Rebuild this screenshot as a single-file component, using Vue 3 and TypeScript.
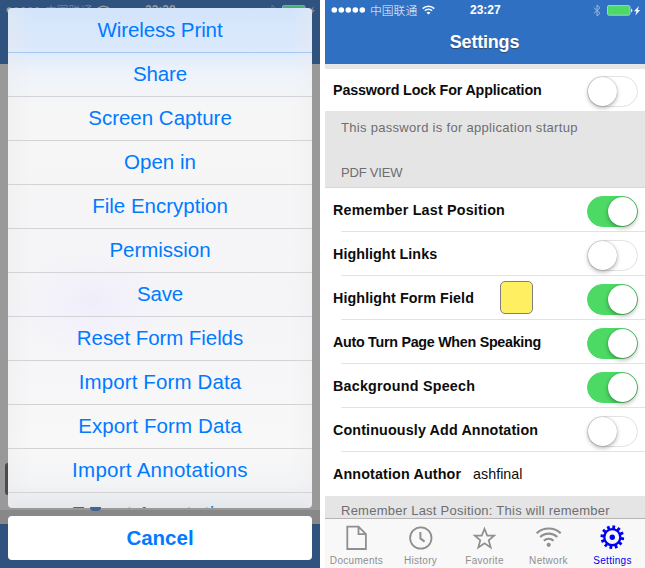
<script setup lang="ts">
interface Action {
  label: string
  tracking: number
}
interface Setting {
  label: string
  tracking: number
  on?: boolean
  color?: boolean
  value?: string
}
interface Tab {
  name: string
  icon: 'doc' | 'clock' | 'star' | 'wifi' | 'gear'
}

const actions: Action[] = [
  { label: 'Wireless Print', tracking: -0.1 },
  { label: 'Share', tracking: -0.1 },
  { label: 'Screen Capture', tracking: 0 },
  { label: 'Open in', tracking: 0 },
  { label: 'File Encryption', tracking: 0 },
  { label: 'Permission', tracking: -0.02 },
  { label: 'Save', tracking: -0.2 },
  { label: 'Reset Form Fields', tracking: -0.07 },
  { label: 'Import Form Data', tracking: 0.12 },
  { label: 'Export Form Data', tracking: 0.12 },
  { label: 'Import Annotations', tracking: 0.27 },
  { label: 'Export Annotations', tracking: 0.27 },
]

const settings: Setting[] = [
  { label: 'Remember Last Position', tracking: 0.2, on: true },
  { label: 'Highlight Links', tracking: 0.06, on: false },
  { label: 'Highlight Form Field', tracking: 0.1, on: true, color: true },
  { label: 'Auto Turn Page When Speaking', tracking: -0.28, on: true },
  { label: 'Background Speech', tracking: 0.23, on: true },
  { label: 'Continuously Add Annotation', tracking: 0.14, on: false },
  { label: 'Annotation Author', tracking: 0.14, value: 'ashfinal' },
]

const tabs: Tab[] = [
  { name: 'Documents', icon: 'doc' },
  { name: 'History', icon: 'clock' },
  { name: 'Favorite', icon: 'star' },
  { name: 'Network', icon: 'wifi' },
  { name: 'Settings', icon: 'gear' },
]

const phones = [
  { id: 'menu', time: '23:28' },
  { id: 'settings', time: '23:27' },
]
const teeth: number[] = Array.from({ length: 12 }, (_, i) => i * 30 + 8)
</script>

<template>
  <div class="board">
    <section v-for="phone in phones" :key="phone.id" class="phone" :class="phone.id">
      <div class="navbar">
        <div class="status">
          <svg class="signal" width="35" height="8" viewBox="0 0 35 8">
            <circle v-for="n in 5" :key="n" :cx="n * 7 - 3.7" cy="4" r="2.8" fill="currentColor" />
          </svg>
          <span class="carrier">中国联通</span>
          <svg class="wifi" width="13" height="10" viewBox="0 0 13 10" fill="none" stroke="currentColor">
            <path d="M.7 3.6a8.3 8.3 0 0 1 11.6 0M2.9 5.8a5.1 5.1 0 0 1 7.2 0" stroke-width="1.6" />
            <path d="M6.5 9.6 4.6 7.7a2.8 2.8 0 0 1 3.8 0Z" fill="currentColor" stroke="none" />
          </svg>
          <span class="time">{{ phone.time }}</span>
          <svg class="bluetooth" width="8" height="13" viewBox="0 0 8 13" fill="none" stroke="currentColor">
            <path d="m.8 3.6 6.2 5.6L4 12V1l3 2.8L.8 9.4" />
          </svg>
          <svg class="battery" width="34" height="11" viewBox="0 0 34 11">
            <rect x=".5" y=".6" width="22.5" height="9.6" rx="1.4" fill="#4cd964" stroke="#a9c8e4" />
            <path d="M24 3.5q1.4.3 1.4 2t-1.4 2Z" fill="#dfeaf6" />
            <path d="m32 1-5 5.300h2.500l-1.200 4.200 4.800-5.500h-2.400Z" fill="currentColor" />
          </svg>
        </div>
        <h1 v-if="phone.id === 'settings'">Settings</h1>
      </div>

      <template v-if="phone.id === 'menu'">
        <div class="dimmed"></div>
        <div class="dimmed-foot"></div>
        <div class="dimmed-tabs"></div>
        <span class="side-tab"></span>
        <div class="overlay">
          <div class="sheet">
            <div class="sheet-list">
              <button v-for="a in actions" :key="a.label" class="action" :style="{ letterSpacing: a.tracking + 'px' }">
                {{ a.label }}
              </button>
            </div>
            <span class="knob"></span>
          </div>
          <button class="cancel">Cancel</button>
        </div>
      </template>

      <template v-else>
        <div class="row first">
          <span class="label">Password Lock For Application</span>
          <i class="switch"></i>
        </div>
        <div class="section">
          <p class="note">This password is for application startup</p>
          <p class="heading">PDF VIEW</p>
        </div>
        <div class="rows">
          <div v-for="s in settings" :key="s.label" class="row">
            <span class="label" :style="{ letterSpacing: s.tracking + 'px' }">{{ s.label }}</span>
            <span v-if="s.color" class="swatch"></span>
            <span v-if="s.value" class="value">{{ s.value }}</span>
            <i v-else class="switch" :class="{ on: s.on }"></i>
          </div>
        </div>
        <p class="footnote">Remember Last Position: This will remember</p>
        <nav class="tabs">
          <div v-for="t in tabs" :key="t.name" class="tab" :class="{ active: t.icon === 'gear' }">
            <svg width="28" height="28" viewBox="0 0 28 28" fill="none" stroke="currentColor" stroke-width="1.8">
              <path v-if="t.icon === 'doc'" d="M4.300 2.600h11.200l7.400 7.500V25H4.300ZM15.500 2.600v7.500h7.400" />
              <template v-else-if="t.icon === 'clock'">
                <circle cx="13.800" cy="14" r="10.700" />
                <path d="M13.400 8v6.400l4.200 3.200" stroke-width="2" />
              </template>
              <path
                v-else-if="t.icon === 'star'"
                d="m13.500 4.800 2.700 6.800h7l-5.500 4.700 2 7.200-6.200-4.200-6.200 4.200 2-7.200-5.500-4.700h7Z"
                stroke-width="1.700"
              />
              <template v-else-if="t.icon === 'wifi'">
                <path d="M1.700 9.200a17.500 17.500 0 0 1 24 0M5.200 13.100a12.200 12.200 0 0 1 17 0M8.900 16.700a7 7 0 0 1 9.600 0" stroke-width="2.100" />
                <circle cx="13.700" cy="20.800" r="2.100" fill="currentColor" stroke="none" />
              </template>
              <template v-else>
                <circle cx="13.300" cy="13.200" r="8" stroke-width="2.300" />
                <circle cx="13.300" cy="13.200" r="2.700" fill="currentColor" stroke="none" />
                <path v-for="d in teeth" :key="d" d="M13.300 1.400v3.500" stroke-width="2.800" :transform="`rotate(${d} 13.3 13.2)`" />
              </template>
            </svg>
            <span>{{ t.name }}</span>
          </div>
        </nav>
      </template>
    </section>
  </div>
</template>

<style>
body {
  background: #fff;
  overflow: hidden;
}
</style>

<style scoped>
.board {
  display: flex;
  gap: 5px;
  width: 645px;
  height: 568px;
  overflow: hidden;
  background: #fff;
  font-family: 'Liberation Sans', 'Noto Sans CJK SC', sans-serif;
}
.phone {
  position: relative;
  display: flex;
  flex-direction: column;
  width: 320px;
  height: 568px;
  overflow: hidden;
}
.navbar {
  flex: none;
  box-sizing: border-box;
  height: 64px;
  background: #3070c3;
  color: #fff;
}
.status {
  display: flex;
  align-items: center;
  height: 20px;
  padding-left: 6px;
}
.carrier {
  width: 47px;
  margin-left: 4px;
  font: 300 11.8px/20px 'Noto Sans CJK SC', sans-serif;
  opacity: 0.95;
  white-space: nowrap;
}
.wifi {
  margin-left: 5px;
}
.time {
  width: 32px;
  margin-left: 35px;
  font-size: 12px;
  font-weight: bold;
}
.bluetooth {
  margin-left: 91px;
  opacity: 0.5;
}
.battery {
  margin-left: 6px;
}
h1 {
  margin: 0;
  font-size: 18px;
  line-height: 45px;
  font-weight: bold;
  text-align: center;
  letter-spacing: -0.2px;
  text-indent: -1px;
  text-shadow: 0 1px 1px rgba(50, 50, 50, 0.6);
}
.menu .navbar {
  background: #30527f;
  color: #999;
}
.menu .battery {
  opacity: 0.7;
}
.dimmed {
  height: 446px;
  background: #999;
}
.dimmed-foot {
  height: 14px;
  background: #888;
}
.dimmed-tabs {
  height: 44px;
  background: #30527f;
}
.side-tab {
  position: absolute;
  left: 5px;
  top: 463px;
  width: 12px;
  height: 32px;
  border-radius: 3px;
  background: #4b4b4b;
}
.overlay {
  position: absolute;
  inset: 8px;
  display: flex;
  flex-direction: column;
  gap: 8px;
}
.sheet {
  position: relative;
  height: 500px;
}
.sheet-list {
  box-sizing: border-box;
  height: 500px;
  padding-top: 1px;
  overflow: hidden;
  border-radius: 4px;
  background:
    radial-gradient(ellipse 75px 55px at 85px 294px, rgba(236, 230, 255, 0.5), transparent),
    linear-gradient(90deg, rgba(234, 234, 234, 0.4), transparent 8%, transparent 93%, rgba(236, 236, 236, 0.4)),
    linear-gradient(#d2e4fb 0, #dce9fb 40px, #eef3fb 65px, #f6f6f6 100px, #f5f5f8 300px, #f8f8f8 440px, #f3f4f6 475px, #e4e7eb 500px);
}
.action {
  display: block;
  box-sizing: border-box;
  width: 100%;
  height: 44px;
  padding: 0 0 2px;
  border: 0;
  border-bottom: 1px solid #d2d2d7;
  background: none;
  color: #007aff;
  font: 20.5px/41px 'Liberation Sans', sans-serif;
}
.action:first-child {
  border-bottom-color: #a5c8f2;
}
.knob {
  position: absolute;
  left: 82px;
  top: 499px;
  width: 11px;
  height: 4px;
  border-radius: 0 0 6px 6px;
  background: #456292;
}
.cancel {
  flex: none;
  height: 44px;
  padding: 0;
  border: 0;
  border-radius: 4px;
  background: #fff;
  color: #007aff;
  font: bold 20.5px/44px 'Liberation Sans', sans-serif;
}
.row {
  position: relative;
  box-sizing: border-box;
  display: flex;
  align-items: center;
  height: 44px;
  padding-left: 8px;
  background: linear-gradient(#e2e2e2, #e2e2e2) 16px 100% / 304px 1px no-repeat #fff;
}
.row.first {
  height: 47px;
  border-top: 5px solid #e5e5e5;
  background: #fff;
}
.row:last-child {
  background: #fff;
}
.label {
  font-size: 14.3px;
  font-weight: bold;
  color: #0c0c0c;
  letter-spacing: -0.16px;
  white-space: nowrap;
}
.swatch {
  box-sizing: border-box;
  width: 33px;
  height: 33px;
  margin-left: 26px;
  margin-bottom: 2px;
  border: 1px solid #808080;
  border-radius: 5px;
  background: #ffef61;
}
.value {
  margin-left: 12px;
  font-size: 14.3px;
  color: #0c0c0c;
}
.switch {
  position: relative;
  top: 1px;
  box-sizing: border-box;
  width: 51px;
  height: 31px;
  margin-left: auto;
  margin-right: 7px;
  border: 1px solid #e2e2e2;
  border-radius: 16px;
  background: #fff;
}
.switch::after {
  content: '';
  position: absolute;
  left: 0;
  top: 0;
  width: 29px;
  height: 29px;
  border-radius: 50%;
  background: #fff;
  box-shadow: 0 0 1px rgba(0, 0, 0, 0.4), 0 2px 4px rgba(0, 0, 0, 0.3);
}
.switch.on {
  border-color: #4cd964;
  background: #4cd964;
}
.switch.on::after {
  left: 20px;
}
.section {
  box-sizing: border-box;
  height: 77px;
  padding: 9px 16px 0;
  border-bottom: 1px solid #d8d8d8;
  background: #e5e5e5;
  color: #6d6d72;
}
p {
  margin: 0;
  font-size: 13px;
  line-height: 16px;
  white-space: nowrap;
}
.note {
  letter-spacing: 0.3px;
}
.heading {
  margin-top: 29px;
  letter-spacing: -0.2px;
}
.footnote {
  flex: none;
  box-sizing: border-box;
  height: 22px;
  padding: 7px 16px 0;
  background: #e5e5e5;
  color: #6d6d72;
  letter-spacing: 0.25px;
}
.tabs {
  box-sizing: border-box;
  display: grid;
  grid-template-columns: repeat(5, 64px);
  height: 50px;
  margin-top: auto;
  border-top: 1px solid #b5b5b5;
  background: #f8f8f8;
}
.tab {
  display: flex;
  flex-direction: column;
  align-items: center;
  padding: 5px 1px 0 0;
  color: #8f8f8f;
  font-size: 10px;
  line-height: 18px;
  letter-spacing: 0.3px;
}
.tab.active {
  color: #0000f5;
}
</style>
